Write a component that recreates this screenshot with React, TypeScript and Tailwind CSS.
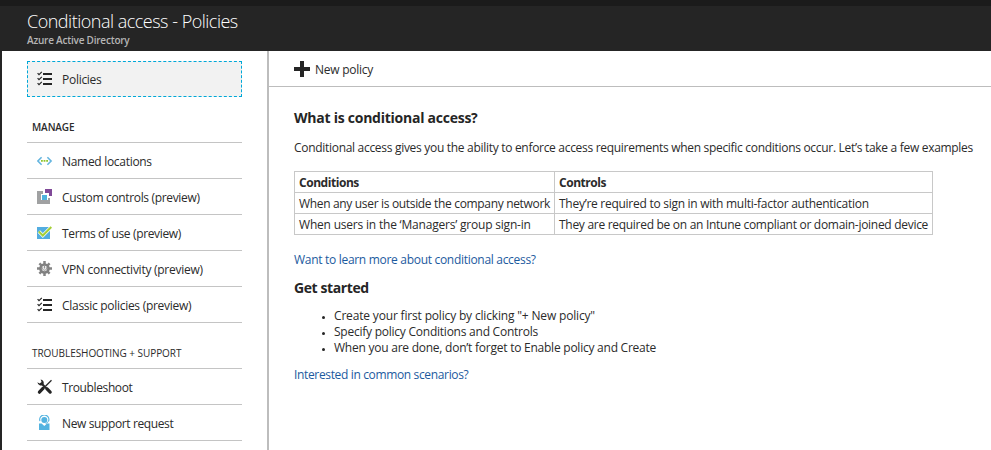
import type { ReactNode } from 'react';

function ChecklistIcon() {
  return (
    <svg width="16" height="16" viewBox="0 0 16 16" fill="none" stroke="#252525">
      <path d="M6 3h9M6 8h9M6 13h9" strokeWidth="2" />
      <path d="M.6 2.2 2 3.6 4.8.9M.6 7.2 2 8.6l2.8-2.7M.6 12.2 2 13.6l2.8-2.7" strokeWidth="1.2" />
    </svg>
  );
}

function LocationsIcon() {
  return (
    <svg width="16" height="16" viewBox="0 0 16 16" fill="none">
      <path d="M4.6 4.2.9 8l3.7 3.8M10.4 4.2 14.1 8l-3.7 3.8" stroke="#65b5df" strokeWidth="1.6" />
      <path d="M4 7h1.8v1.8H4zM6.6 7h1.8v1.8H6.6zM9.2 7H11v1.8H9.2z" fill="#8fc52c" />
    </svg>
  );
}

function ControlsIcon() {
  return (
    <svg width="16" height="16" viewBox="0 0 16 16">
      <path d="M0 2h6v3H4v6h7V9h2v6H0z" fill="#a0a1a2" />
      <path d="M8 0h7v7h-3V4H8z" fill="#804998" />
      <path d="M4 5h7v6H4z" fill="#fff" />
      <path d="M5 6h5v5H5z" fill="#4fb3dd" />
    </svg>
  );
}

function TermsIcon() {
  return (
    <svg width="16" height="16" viewBox="0 0 16 16" fill="none">
      <path d="M0 2h13v12H0z" fill="#53ade0" />
      <path d="m1.8 6.5 4 4L14.3 2" stroke="#fff" strokeWidth="3.4" />
      <path d="m1.8 6.5 4 4L14.3 2" stroke="#a5cf38" strokeWidth="2" />
    </svg>
  );
}

function GearIcon() {
  return (
    <svg width="16" height="16" viewBox="0 0 16 16" fill="none">
      <g stroke="#858585" strokeWidth="2.5">
        <path d="M7.5 0v15M0 7.5h15M2.4 2.4l10.2 10.2M12.6 2.4 2.4 12.6" />
      </g>
      <circle cx="7.5" cy="7.5" r="4" fill="#eee" stroke="#808080" strokeWidth="2.6" />
      <path d="M7.5 4.9v2.6M9.3 6.3a2 2 0 1 1-3.5 0" stroke="#888" strokeWidth=".9" />
    </svg>
  );
}

function ToolsIcon() {
  return (
    <svg width="16" height="16" viewBox="0 0 16 16" fill="none">
      <path d="M14.5 1.2 8.5 7.2" stroke="#252525" strokeWidth="1.3" />
      <path d="m6.2 9.2-3.8 4" stroke="#252525" strokeWidth="3.2" strokeLinecap="round" />
      <path d="m5 5 4 4" stroke="#252525" strokeWidth="2.2" />
      <path d="m9.8 9.6 3.4 3.5" stroke="#252525" strokeWidth="3.2" strokeLinecap="round" />
      <path d="M3.6.4a3.6 3.6 0 0 1 2.8 5.2A3.7 3.7 0 0 1 .4 3.2l2.2 1.2L4.6 3z" fill="#252525" />
    </svg>
  );
}

function SupportIcon() {
  return (
    <svg width="16" height="16" viewBox="0 0 16 16" fill="none">
      <path d="M3 6.1a4.6 4.6 0 1 1 8.6 0" stroke="#53b3e0" strokeWidth="1.1" />
      <circle cx="7.3" cy="5" r="3" fill="#53b3e0" />
      <path d="M2 8.5h2.6l2.7 2.6L10 8.5h2.5V15H2z" fill="#53b3e0" />
      <path d="M11.4 5.8c-.2 1.4-1.2 2.3-2.7 2.6" stroke="#53b3e0" />
    </svg>
  );
}

function NavItem({ icon, className, children }: { icon: ReactNode; className: string; children: ReactNode }) {
  return (
    <li className="flex h-9 items-center border-b border-[#c4c4c4] pl-[10px]">
      <span className="w-[25px] shrink-0">{icon}</span>
      <span className={`pt-[2px] whitespace-nowrap ${className}`}>{children}</span>
    </li>
  );
}

function Bullet({ className, children }: { className: string; children: ReactNode }) {
  return (
    <li className="flex items-center">
      <span className="mt-[2px] mr-[9px] ml-[28px] size-[3px] rounded-full bg-[#252525]" />
      <span className={className}>{children}</span>
    </li>
  );
}

export default function App() {
  return (
    <div className="flex h-[450px] w-[991px] flex-col overflow-hidden bg-white font-['Open_Sans','Noto_Sans',sans-serif] text-[12px] leading-4 text-[#2b2b2b]">
      <header className="h-[51px] shrink-0 border-t-[6px] border-[#1b1b1b] bg-[#252525] pl-[27px]">
        <h1 className="pt-[3px] text-[18px] leading-[25px] font-light tracking-[-0.5px] text-white">
          Conditional access - Policies
        </h1>
        <p className="text-[10px] leading-[12px] font-semibold tracking-[-0.22px] text-[#b5b5b5]">Azure Active Directory</p>
      </header>

      <div className="flex min-h-0 flex-1">
        <aside className="w-[269px] shrink-0 border-r-2 border-l-2 border-l-[#252525] border-r-[#bdbdbd] pt-[10px] pr-[25px] pl-[25px]">
          <div className="flex h-9 items-center border border-dashed border-[#00a8d8] bg-[#f2f2f2] pl-[9px]">
            <span className="w-[25px]"><ChecklistIcon /></span>
            <span className="pt-[2px] tracking-[-0.28px]">Policies</span>
          </div>

          <h2 className="h-[46px] border-b border-[#c4c4c4] pt-[22px] pl-[5px] text-[10px] font-semibold tracking-[-0.1px]">MANAGE</h2>
          <ul>
            <NavItem icon={<LocationsIcon />} className="tracking-[-0.3px]">Named locations</NavItem>
            <NavItem icon={<ControlsIcon />} className="tracking-[-0.34px]">Custom controls (preview)</NavItem>
            <NavItem icon={<TermsIcon />} className="tracking-[-0.35px]">Terms of use (preview)</NavItem>
            <NavItem icon={<GearIcon />} className="tracking-[-0.26px]">VPN connectivity (preview)</NavItem>
            <NavItem icon={<ChecklistIcon />} className="tracking-[-0.29px]">Classic policies (preview)</NavItem>
          </ul>

          <h2 className="h-[46px] border-b border-[#c4c4c4] pt-[22px] pl-[5px] text-[10px] font-medium tracking-[-0.05px]">
            TROUBLESHOOTING + SUPPORT
          </h2>
          <ul>
            <NavItem icon={<ToolsIcon />} className="tracking-[-0.38px]">Troubleshoot</NavItem>
            <NavItem icon={<SupportIcon />} className="tracking-[-0.38px]">New support request</NavItem>
          </ul>
        </aside>

        <main className="min-w-0 flex-1">
          <div className="flex h-9 items-center gap-[5px] border-b border-[#bdbdbd] pl-[25px]">
            <svg width="16" height="16" viewBox="0 0 16 16">
              <path d="M6 0h4v6h6v4h-6v6H6v-6H0V6h6z" fill="#252525" />
            </svg>
            <span className="pt-[2px] tracking-[-0.25px]">New policy</span>
          </div>

          <div className="pl-[25px] whitespace-nowrap">
            <h2 className="pt-[21px] text-[14px] leading-5 font-bold tracking-[-0.25px] text-[#252525]">What is conditional access?</h2>
            <p className="pt-[12px] tracking-[-0.3px]">
              Conditional access gives you the ability to enforce access requirements when specific conditions occur. Let’s take a few examples
            </p>
            <table className="mt-[15px] w-[639px] table-fixed border-collapse [&_td]:h-[21px] [&_td]:border [&_td]:border-[#c8c8c8] [&_td]:pt-[2px] [&_td]:pb-0 [&_td]:pl-1 [&_th]:h-[21px] [&_th]:border [&_th]:border-[#c8c8c8] [&_th]:pt-[2px] [&_th]:pb-0 [&_th]:pl-1 [&_th]:text-left [&_th]:font-bold">
              <colgroup>
                <col className="w-[260px]" />
                <col />
              </colgroup>
              <thead>
                <tr className="tracking-[-0.45px]"><th>Conditions</th><th>Controls</th></tr>
              </thead>
              <tbody>
                <tr>
                  <td className="tracking-[-0.33px]">When any user is outside the company network</td>
                  <td className="tracking-[-0.27px]">They’re required to sign in with multi-factor authentication</td>
                </tr>
                <tr>
                  <td className="tracking-[-0.2px]">When users in the ‘Managers’ group sign-in</td>
                  <td className="tracking-[-0.29px]">They are required be on an Intune compliant or domain-joined device</td>
                </tr>
              </tbody>
            </table>
            <a className="mt-[17px] block tracking-[-0.3px] text-[#1c5a9e]">Want to learn more about conditional access?</a>
            <h2 className="pt-[10px] text-[14px] leading-5 font-bold tracking-[-0.4px] text-[#252525]">Get started</h2>
            <ul className="mt-[10px]">
              <Bullet className="tracking-[-0.17px]">Create your first policy by clicking "+ New policy"</Bullet>
              <Bullet className="tracking-[-0.24px]">Specify policy Conditions and Controls</Bullet>
              <Bullet className="tracking-[-0.24px]">When you are done, don’t forget to Enable policy and Create</Bullet>
            </ul>
            <a className="mt-[11px] block tracking-[-0.35px] text-[#1c5a9e]">Interested in common scenarios?</a>
          </div>
        </main>
      </div>
    </div>
  );
}
